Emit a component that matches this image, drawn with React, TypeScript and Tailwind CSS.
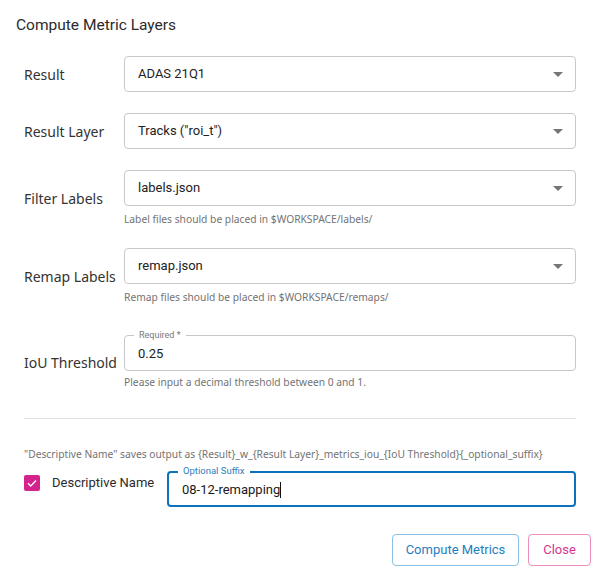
import React from 'react';

const roboto = { fontFamily: 'Roboto, "Noto Sans", sans-serif' };
const noto = { fontFamily: '"Noto Sans", "Open Sans", sans-serif' };

function Arrow() {
  return (
    <svg width="10" height="5" viewBox="0 0 10 5" className="shrink-0">
      <path d="M0 0 L10 0 L5 5 Z" fill="#757575" />
    </svg>
  );
}

function Helper({ children, className = '' }: { children: React.ReactNode; className?: string }) {
  return (
    <div className={`text-[10.25px] leading-[14px] text-[#737373] ${className}`} style={noto}>
      {children}
    </div>
  );
}

function SelectField({ value, helper }: { value: string; helper?: string }) {
  return (
    <div className="flex-1">
      <div className="h-[36px] rounded-[4px] border border-[#c8c8c8] flex items-center justify-between pl-[13px] pr-[12px]">
        <span className="text-[13px] text-[#222]">{value}</span>
        <Arrow />
      </div>
      {helper && <Helper className="mt-[6px]">{helper}</Helper>}
    </div>
  );
}

function Row({ label, children, className = '' }: { label: string; children: React.ReactNode; className?: string }) {
  return (
    <div className={`flex items-center ${className}`}>
      <div className="w-[100px] shrink-0 text-[14px] text-[#333]" style={noto}>
        {label}
      </div>
      {children}
    </div>
  );
}

export default function App() {
  return (
    <div className="w-[599px] h-[575px] bg-white relative" style={roboto}>
      <div className="pl-[16px] pt-[14px] text-[15.5px] leading-[22px] text-[#2b2b2b]">Compute Metric Layers</div>

      <div className="pr-[23px] pl-[24px] mt-[20px]">
        <Row label="Result">
          <SelectField value="ADAS 21Q1" />
        </Row>
        <Row label="Result Layer" className="mt-[21px]">
          <SelectField value={'Tracks ("roi_t")'} />
        </Row>
        <Row label="Filter Labels" className="mt-[21px]">
          <SelectField value="labels.json" helper="Label files should be placed in $WORKSPACE/labels/" />
        </Row>
        <Row label="Remap Labels" className="mt-[22px]">
          <SelectField value="remap.json" helper="Remap files should be placed in $WORKSPACE/remaps/" />
        </Row>
        <Row label="IoU Threshold" className="mt-[31px]">
          <div className="flex-1">
            <div className="relative h-[36px] rounded-[4px] border border-[#c8c8c8] flex items-center pl-[13px]">
              <span className="absolute left-[9px] -top-[7px] bg-white px-[5px] text-[9px] leading-[12px] text-[#777]">
                Required *
              </span>
              <span className="text-[13px] text-[#222] mt-[1px]">0.25</span>
            </div>
            <Helper className="mt-[4px]">Please input a decimal threshold between 0 and 1.</Helper>
          </div>
        </Row>

        <div className="mt-[29px] border-t border-[#e2e2e2]" />

        <Helper className="mt-[28px] whitespace-nowrap">
          "Descriptive Name" saves output as {'{Result}'}_w_{'{Result Layer}'}_metrics_iou_{'{IoU Threshold}'}{'{_optional_suffix}'}
        </Helper>

        <div className="flex items-start mt-[10px]">
          <div className="flex items-center mt-[2px] w-[143px] shrink-0">
            <div className="w-[16px] h-[16px] rounded-[2px] bg-[#d3238d] flex items-center justify-center">
              <svg width="12" height="12" viewBox="0 0 24 24">
                <path d="M4 12.5 L9.5 18 L20 7" fill="none" stroke="white" strokeWidth="2.6" />
              </svg>
            </div>
            <span className="ml-[12px] text-[13px] text-[#2b2b2b]">Descriptive Name</span>
          </div>
          <div className="relative flex-1 h-[36px] rounded-[4px] border-2 border-[#0b72bd] flex items-center pl-[13px]">
            <span className="absolute left-[9px] -top-[8px] bg-white px-[5px] text-[9.5px] leading-[12px] text-[#2a7fc0]">
              Optional Suffix
            </span>
            <span className="text-[13px] text-[#1a1a1a] mt-[1px]">08-12-remapping</span>
            <span className="w-[1px] h-[16px] bg-[#111] mt-[2px]" />
          </div>
        </div>
      </div>

      <div className="flex justify-end gap-[9px] pr-[8px] mt-[27px]">
        <button className="h-[32px] w-[127px] rounded-[4px] border border-[#8cc0e4] text-[13px] text-[#1f7ec2]">
          Compute Metrics
        </button>
        <button className="h-[32px] w-[63px] rounded-[4px] border border-[#ec8fc0] text-[13px] text-[#d4358f]">
          Close
        </button>
      </div>
    </div>
  );
}
